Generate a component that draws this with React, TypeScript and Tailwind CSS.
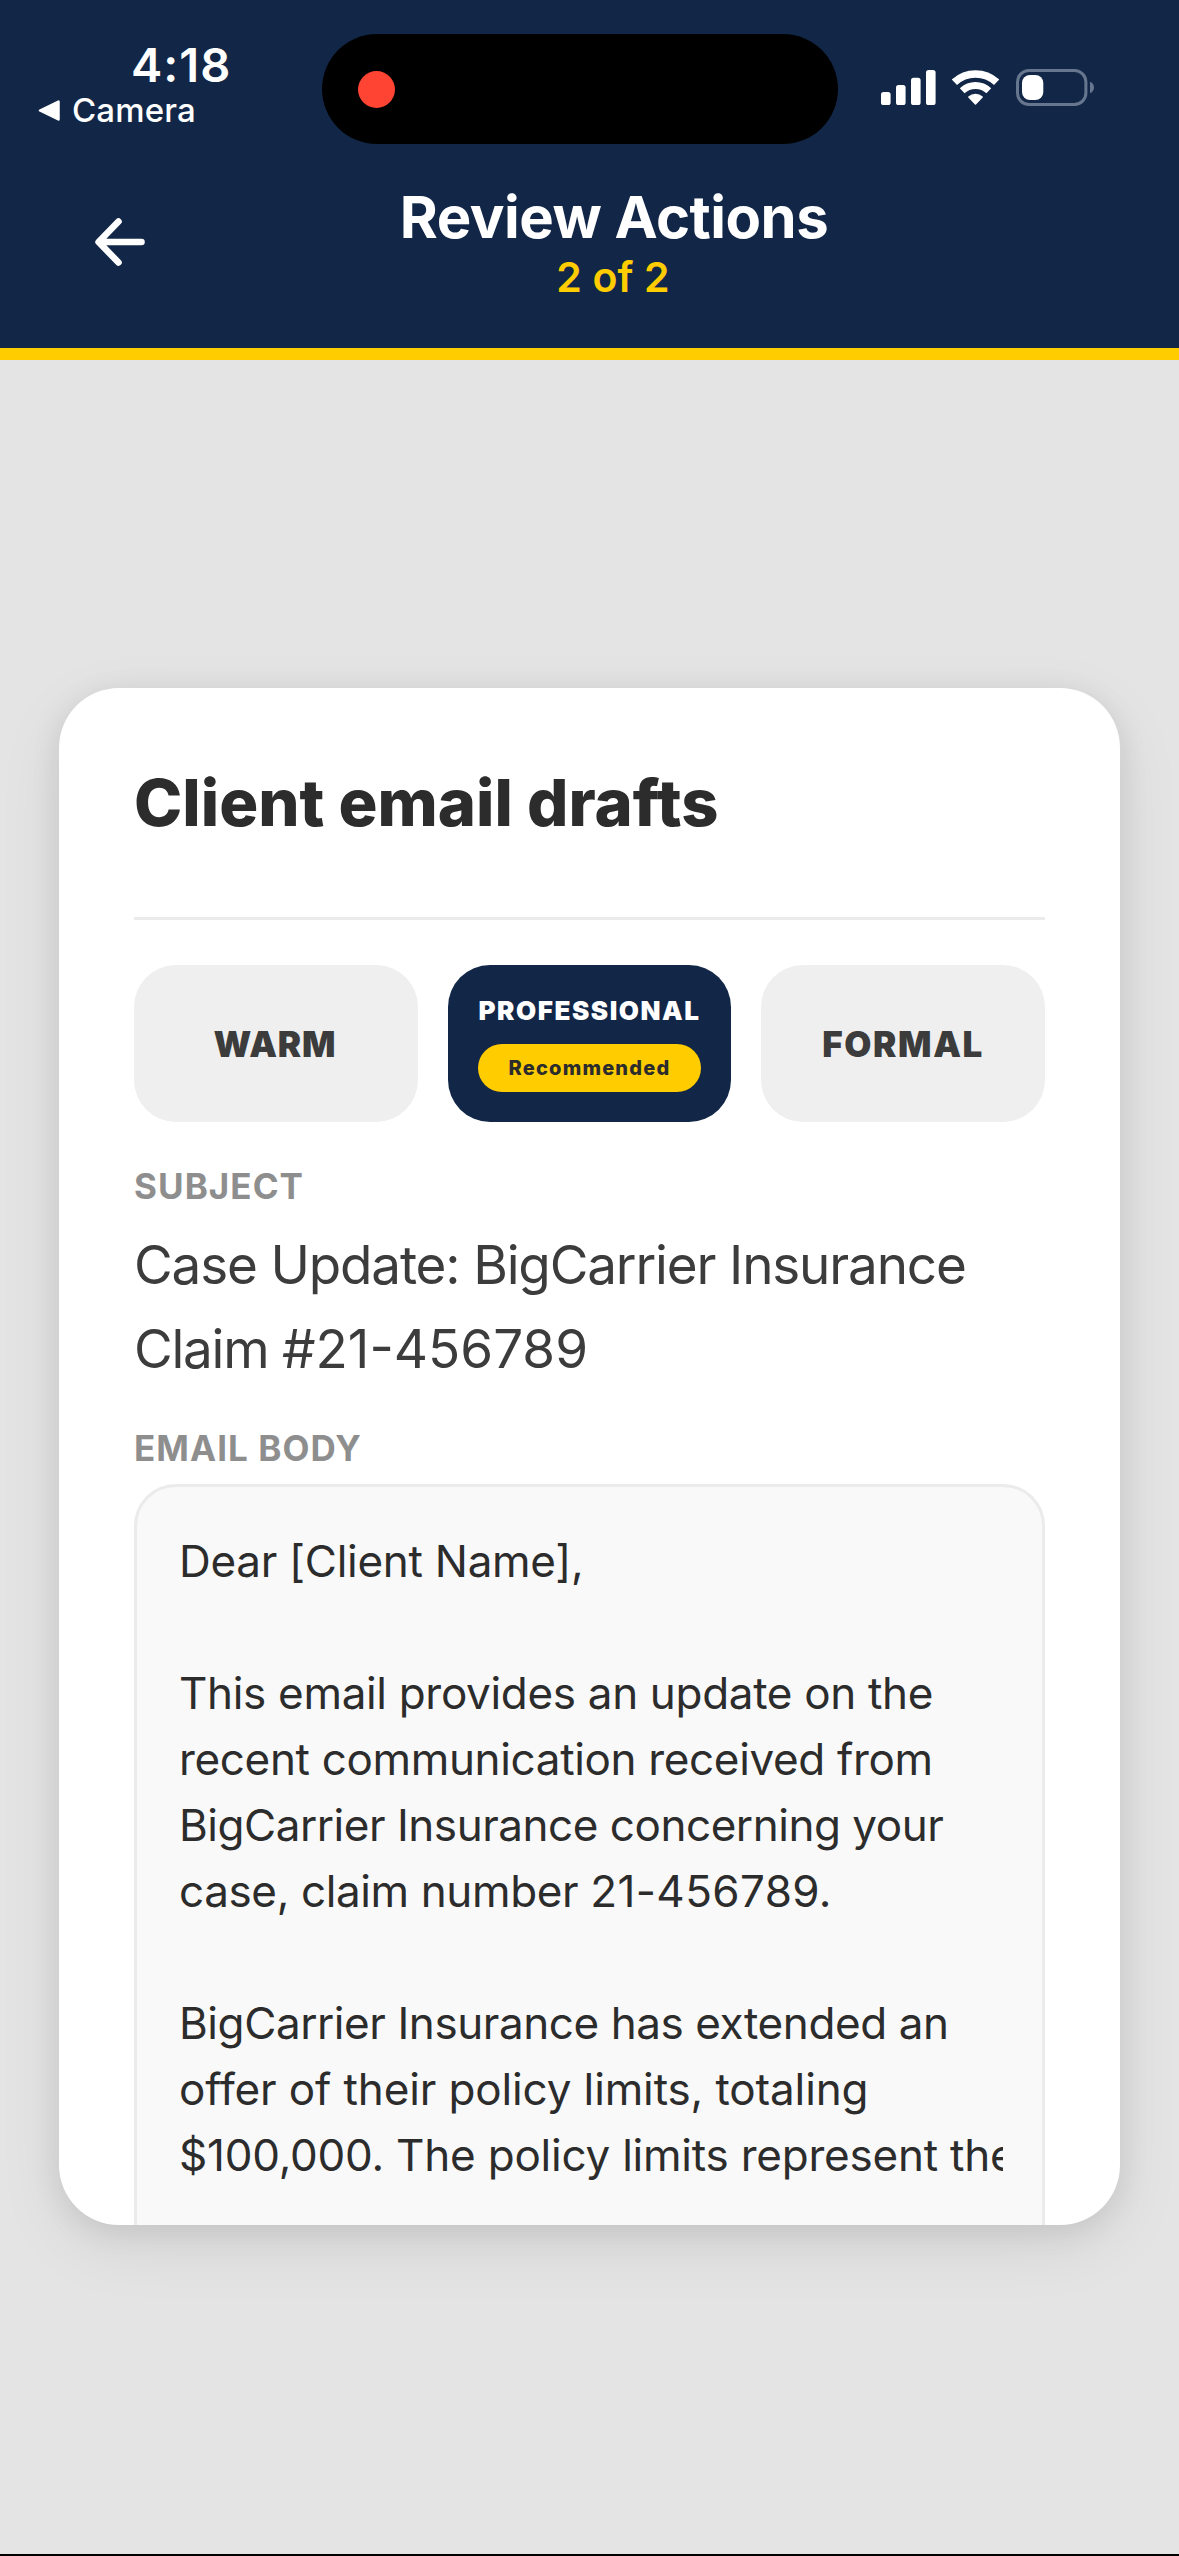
import { useState } from "react";

type Tone = "warm" | "professional" | "formal";

const tones: { id: Tone; label: string; recommended?: boolean; tracking: string }[] = [
  { id: "warm", label: "WARM", tracking: "tracking-[0.8px] pr-0.5" },
  { id: "professional", label: "PROFESSIONAL", recommended: true, tracking: "tracking-[1.55px]" },
  { id: "formal", label: "FORMAL", tracking: "tracking-[1.6px]" },
];

type Segment = { text: string; tracking: string };

const subjectLines: Segment[][] = [
  [{ text: "Case Update: BigCarrier Insurance", tracking: "tracking-[-1.16px]" }],
  [
    { text: "Claim ", tracking: "tracking-[-1.25px]" },
    { text: "#21-456789", tracking: "tracking-[0px]" },
  ],
];

const bodyLines: Segment[][] = [
  [{ text: "Dear [Client Name],", tracking: "tracking-[-0.28px]" }],
  [],
  [{ text: "This email provides an update on the", tracking: "tracking-[-0.32px]" }],
  [{ text: "recent communication received from", tracking: "tracking-[-0.34px]" }],
  [{ text: "BigCarrier Insurance concerning your", tracking: "tracking-[-0.46px]" }],
  [
    { text: "case, claim number ", tracking: "tracking-[-0.38px]" },
    { text: "21-456789.", tracking: "tracking-[0.4px]" },
  ],
  [],
  [{ text: "BigCarrier Insurance has extended an", tracking: "tracking-[-0.42px]" }],
  [{ text: "offer of their policy limits, totaling", tracking: "tracking-[-0.12px]" }],
  [{ text: "$100,000. The policy limits represent the", tracking: "tracking-[-0.22px]" }],
];

function SignalIcon() {
  return (
    <svg width="55" height="35" viewBox="0 0 55 35" fill="white">
      <rect x="0" y="22" width="9.6" height="13" rx="2.6" />
      <rect x="15" y="15" width="9.6" height="20" rx="2.6" />
      <rect x="30" y="7.8" width="9.6" height="27.2" rx="2.6" />
      <rect x="45" y="0" width="9.6" height="35" rx="2.6" />
    </svg>
  );
}

function WifiIcon() {
  return (
    <svg width="47" height="35" viewBox="0 0 47 35" fill="none" stroke="white">
      <path d="M2.4 12.3A31 31 0 0 1 44.6 12.3" strokeWidth="7.6" />
      <path d="M10.2 20.7A19.5 19.5 0 0 1 36.8 20.7" strokeWidth="7" />
      <path d="M23.5 34L16.8 27A10 10 0 0 1 30.2 27Z" fill="white" strokeWidth="1.4" strokeLinejoin="round" />
    </svg>
  );
}

function BatteryIcon() {
  return (
    <svg width="79" height="37" viewBox="0 0 79 37" fill="none">
      <rect x="1.5" y="1.5" width="68.4" height="34" rx="11.5" stroke="#66768e" strokeWidth="3" />
      <rect x="6" y="6" width="21.3" height="25" rx="8" fill="white" />
      <path d="M74 12.8C76.6 13.8 78 16 78 18.5C78 21 76.6 23.2 74 24.2Z" fill="#66768e" />
    </svg>
  );
}

function StatusBar() {
  return (
    <div className="flex h-[150px] items-start">
      <div className="w-[322px] pt-[41px]">
        <p className="pl-[131px] text-[47px] leading-[48px] font-semibold tracking-[1px]">4:18</p>
        <div className="mt-px flex h-10 items-center pl-[38px]">
          <svg width="22" height="21" viewBox="0 0 22 21" fill="white" stroke="white" strokeWidth="2.5" strokeLinejoin="round">
            <path d="M2 10.5L20.5 1.5V19.5Z" />
          </svg>
          <span className="ml-3 text-[33px] leading-10 font-medium tracking-[0.15px]">Camera</span>
        </div>
      </div>
      <div className="mt-[34px] flex h-[110px] w-[516px] items-center rounded-full bg-black pl-9">
        <span className="size-[37px] rounded-full bg-[#ff4433]" />
      </div>
      <div className="mt-[69px] ml-[43px] flex h-[37px] items-center">
        <SignalIcon />
        <span className="ml-4">
          <WifiIcon />
        </span>
        <span className="ml-[17px]">
          <BatteryIcon />
        </span>
      </div>
    </div>
  );
}

function Header() {
  return (
    <header className="h-[360px] border-b-12 border-[#ffcc00] bg-[#122747] text-white">
      <StatusBar />
      <div className="flex items-start pl-[95px]">
        <button className="mt-[68px]" aria-label="Back">
          <svg width="50" height="48" viewBox="0 0 50 48" fill="none" stroke="white" strokeWidth="6.6" strokeLinecap="round" strokeLinejoin="round">
            <path d="M46.5 24H4M23.5 3.5L3.6 24L23.5 44.5" />
          </svg>
        </button>
        <div className="mt-[37px] ml-[254px] w-[430px] text-center">
          <h1 className="text-[58px] leading-[60px] font-bold tracking-[-0.5px] whitespace-nowrap">Review Actions</h1>
          <p className="mt-1.5 pr-0.5 text-[41px] leading-[48px] font-semibold tracking-[0.15px] text-[#ffcc00]">2 of 2</p>
        </div>
      </div>
    </header>
  );
}

function ToneTabs({ value, onChange }: { value: Tone; onChange: (tone: Tone) => void }) {
  return (
    <div className="mt-[45px] grid h-[157px] grid-cols-3 gap-[30px]">
      {tones.map((tone) => {
        const active = tone.id === value;
        return (
          <button
            key={tone.id}
            onClick={() => onChange(tone.id)}
            className={`flex flex-col items-center justify-center rounded-[42px] font-black ${active ? "bg-[#122747] text-white" : "bg-[#efefef] text-[#3c3c3c]"}`}
          >
            {tone.recommended ? (
              <>
                <span className={`text-[26px] leading-8 ${tone.tracking}`}>{tone.label}</span>
                <span className="mt-[17px] h-12 w-[223px] rounded-full bg-[#ffcc00] text-[20px] leading-[48px] font-extrabold tracking-[1.2px] text-[#2c2c2c]">
                  Recommended
                </span>
              </>
            ) : (
              <span className={`text-[35px] leading-[44px] ${tone.tracking}`}>{tone.label}</span>
            )}
          </button>
        );
      })}
    </div>
  );
}

function Lines({ lines, className }: { lines: Segment[][]; className: string }) {
  return lines.map((line, index) => (
    <p key={index} className={`whitespace-pre ${className}`}>
      {line.map((segment) => (
        <span key={segment.text} className={segment.tracking}>
          {segment.text}
        </span>
      ))}
    </p>
  ));
}

export default function App() {
  const [tone, setTone] = useState<Tone>("professional");

  return (
    <div className="flex h-[2556px] w-[1179px] flex-col overflow-hidden border-b-2 border-black bg-[#e4e4e4] font-['Inter',sans-serif]">
      <Header />
      <main className="mx-[59px] mt-[328px] h-[1537px] overflow-hidden rounded-[60px] bg-white px-[75px] pt-[75px] shadow-[0_20px_66px_rgba(0,0,0,0.08),0_6px_30px_rgba(0,0,0,0.09)]">
        <h2 className="text-[65px] leading-[80px] font-extrabold text-[#2c2c2c]">Client email drafts</h2>
        <hr className="mt-[74px] h-[3px] border-0 bg-[#ebebeb]" />

        <ToneTabs value={tone} onChange={setTone} />

        <h3 className="mt-[42px] text-[35px] leading-[44px] font-bold tracking-[1.05px] text-[#8e8e8e]">SUBJECT</h3>
        <div className="mt-[15px] text-[53px] text-[#3c3c3c]">
          <Lines lines={subjectLines} className="h-[84px] leading-[84px]" />
        </div>

        <h3 className="mt-[35px] text-[35px] leading-[44px] font-bold tracking-[1.05px] text-[#8e8e8e]">EMAIL BODY</h3>
        <div className="mt-3.5 h-[900px] rounded-[42px] border-3 border-[#ebebeb] bg-[#f9f9f9] pt-[41px] pr-[39px] pl-[42px]">
          <div className="overflow-hidden text-[44px] text-[#2c2c2c]">
            <Lines lines={bodyLines} className="h-[66px] leading-[66px]" />
          </div>
        </div>
      </main>
    </div>
  );
}
